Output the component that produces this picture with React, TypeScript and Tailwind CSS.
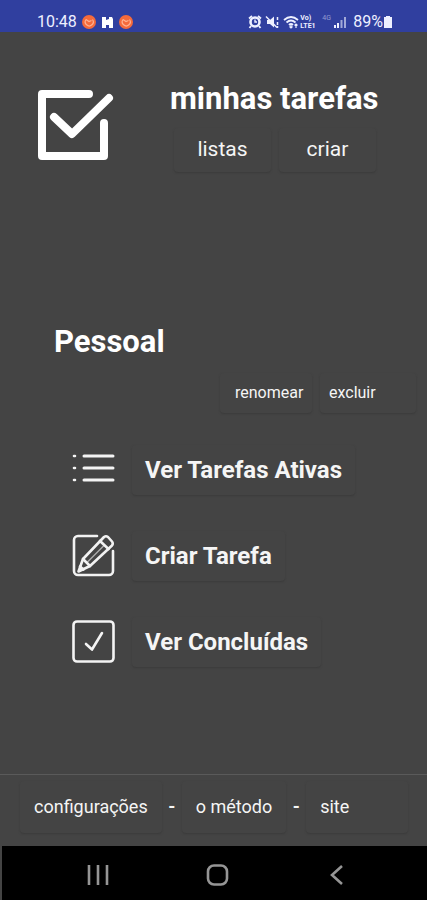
import type { ReactNode } from "react";

function LogoIcon() {
  return (
    <svg width="78" height="74" viewBox="0 0 78 74" fill="none" stroke="#fff" strokeWidth="8" strokeLinecap="round" strokeLinejoin="round" aria-hidden="true">
      <path d="M51 5H4v62h62V34" />
      <path d="M16 28l18 17L71 9" />
    </svg>
  );
}

function ListIcon() {
  return (
    <svg width="44" height="44" viewBox="0 0 44 44" fill="none" stroke="#f4f4f4" strokeLinecap="round" aria-hidden="true">
      <path d="M12 8h29M12 20h29M12 32h29" strokeWidth="3" />
      <path d="M2 8h1M2 20h1M2 32h1" strokeWidth="2.600" />
    </svg>
  );
}

function PencilIcon() {
  return (
    <svg width="44" height="44" viewBox="0 0 44 44" fill="none" stroke="#f2f2f2" strokeWidth="2.600" strokeLinecap="round" strokeLinejoin="round" aria-hidden="true">
      <path d="M25 2H6a4 4 0 0 0-4 4v31a4 4 0 0 0 4 4h31a4 4 0 0 0 4-4V17" />
      <path d="M32 3q2-1.500 4 0l4 4.500q1.500 2 0 4L18 32 6.500 37.500 11 25z" />
      <path d="M28 7l8.500 8M11 25l7 7" />
      <path d="M15 28.500L32 11.500" strokeWidth="1.400" opacity=".6" />
      <path d="M8 32.500l3.500 3" />
    </svg>
  );
}

function DoneIcon() {
  return (
    <svg width="44" height="44" viewBox="0 0 44 44" fill="none" stroke="#f4f4f4" strokeWidth="2.600" strokeLinecap="round" strokeLinejoin="round" aria-hidden="true">
      <rect x="1.500" y="1.500" width="40" height="40" rx="3.500" />
      <path d="M14 24l6 5.500L30 13" />
    </svg>
  );
}

function OrangeBadge() {
  return (
    <svg width="14" height="14" viewBox="0 0 14 14" fill="none" aria-hidden="true">
      <circle cx="7" cy="7" r="7" fill="#f56a3b" />
      <path d="M4 4.500a4 4 0 1 0 6.500 0M4 4.500l3 2 2.500-1" stroke="#ffb293" strokeWidth="1.200" />
    </svg>
  );
}

function StatusIcons() {
  return (
    <svg width="106" height="16" viewBox="0 0 106 16" fill="none" stroke="#eef0ff" strokeWidth="1.800" aria-hidden="true">
      <circle cx="8" cy="8" r="4.500" strokeWidth="2.600" />
      <path d="M2 4.500l3-2.500M14 4.500l-3-2.500M4 12l-1.500 2M12 12l1.500 2" />
      <path d="M8 5.500V8h2" strokeWidth="1.400" />
      <path d="M20 6h3l4-3.500v11L23 10h-3z" fill="#eef0ff" stroke="none" />
      <path d="M19 2.500l11 11" strokeWidth="1.500" />
      <path d="M30.500 3v3M30.500 8v3M30.500 12v2" strokeWidth="1.500" />
      <path d="M37 6q7-6 14 0M39.500 8.500q4.500-4 9 0M42 11q2-2 4 0" />
      <path d="M44 10.500v3.500M42.500 12.500l1.500 1.500 1.500-1.500M49 14v-4M47.500 11.500l1.500-1.500 1.500 1.500" strokeWidth="1.200" />
      <path d="M88 14v-3M91 14V9" strokeWidth="2" />
      <path d="M94.500 14V6M98 14V3" strokeWidth="2" opacity=".6" />
    </svg>
  );
}

type FlatButtonProps = { children: ReactNode; className: string };

function FlatButton({ children, className }: FlatButtonProps) {
  return (
    <button type="button" className={"rounded-sm bg-[#444444] whitespace-nowrap shadow-[0_1px_2px_#3b3b3b] " + className}>
      {children}
    </button>
  );
}

const actions = [
  { label: "Ver Tarefas Ativas", icon: <ListIcon /> },
  { label: "Criar Tarefa", icon: <PencilIcon /> },
  { label: "Ver Concluídas", icon: <DoneIcon /> },
];

export default function App() {
  return (
    <div className="flex min-h-screen flex-col bg-[#444444] font-['Roboto',sans-serif] text-[#f5f5f5]">
      <div className="flex h-8 items-end justify-between bg-[#303f9f] pr-[34px] pl-[37px] text-base leading-5 text-[#eef0ff]">
        <div className="flex items-center gap-[5px]">
          <span>10:48</span>
          <OrangeBadge />
          <svg width="13" height="13" viewBox="0 0 13 13" fill="#fff" aria-hidden="true">
            <path d="M1 1h4v3l3-1V1h3l1 2v9H8V9H5v3H1z" />
          </svg>
          <OrangeBadge />
        </div>
        <div className="flex items-center">
          <div className="relative">
            <StatusIcons />
            <div className="absolute top-0 left-[53px] flex flex-col text-[7px] leading-[8px] font-bold">
              <span>Vo)</span>
              <span>LTE1</span>
            </div>
            <span className="absolute top-0 left-[75px] text-[7px] leading-[8px] opacity-50">4G</span>
          </div>
          <span>89%</span>
          <svg width="10" height="14" viewBox="0 0 10 14" fill="#eef0ff" aria-hidden="true">
            <path d="M3 1h4v1h2v11H1V2h2z" />
          </svg>
        </div>
      </div>

      <header className="flex items-start pt-[49px] pr-12 pl-[38px]">
        <div className="mt-2 shrink-0">
          <LogoIcon />
        </div>
        <div className="ml-[54px]">
          <h1 className="text-[31px] leading-9 font-bold whitespace-nowrap text-white">minhas tarefas</h1>
          <nav className="mt-[11px] ml-1 flex gap-2">
            <FlatButton className="h-11 w-[97px] text-[21px]">listas</FlatButton>
            <FlatButton className="h-11 w-[97px] text-[21px]">criar</FlatButton>
          </nav>
        </div>
      </header>

      <main className="flex-1 pt-[152px] pb-8">
        <h2 className="pl-[54px] text-[31px] leading-9 font-bold text-white">Pessoal</h2>
        <div className="mt-[13px] mr-[11px] flex justify-end gap-2">
          <FlatButton className="h-10 w-[92px] pl-[15px] text-left text-base">renomear</FlatButton>
          <FlatButton className="h-10 w-24 pl-[9px] text-left text-base">excluir</FlatButton>
        </div>
        <ul className="mt-8 flex flex-col gap-9 pl-[72px]">
          {actions.map((action) => (
            <li key={action.label} className="flex items-center">
              {action.icon}
              <FlatButton className="ml-4 h-[50px] px-[13px] text-2xl font-bold">{action.label}</FlatButton>
            </li>
          ))}
        </ul>
      </main>

      <footer className="flex h-[72px] items-center border-t border-[#5a5a5a] pr-4 pb-2 pl-5 text-lg">
        <FlatButton className="h-[52px] px-[14px]">configurações</FlatButton>
        <span className="w-5 text-center font-bold">-</span>
        <FlatButton className="h-[52px] px-[14px]">o método</FlatButton>
        <span className="w-5 text-center font-bold">-</span>
        <FlatButton className="h-[52px] w-[102px] pl-[14px] text-left">site</FlatButton>
      </footer>

      <div className="flex h-[54px] items-center justify-between border-l-2 border-[#444444] bg-black pt-1 pr-[70px] pl-[76px]">
        <button type="button" aria-label="Recentes" className="p-2">
          <svg width="24" height="24" viewBox="0 0 24 24" stroke="#959595" strokeWidth="2.600" aria-hidden="true">
            <path d="M3 2v20M12 2v20M21 2v20" />
          </svg>
        </button>
        <button type="button" aria-label="Início" className="p-2">
          <svg width="24" height="24" viewBox="0 0 24 24" fill="none" stroke="#959595" strokeWidth="2.600" aria-hidden="true">
            <rect x="2" y="2.500" width="19" height="19" rx="6" />
          </svg>
        </button>
        <button type="button" aria-label="Voltar" className="p-2">
          <svg width="24" height="24" viewBox="0 0 24 24" fill="none" stroke="#959595" strokeWidth="2.600" aria-hidden="true">
            <path d="M17 3L7 12l10 9" />
          </svg>
        </button>
      </div>
    </div>
  );
}
